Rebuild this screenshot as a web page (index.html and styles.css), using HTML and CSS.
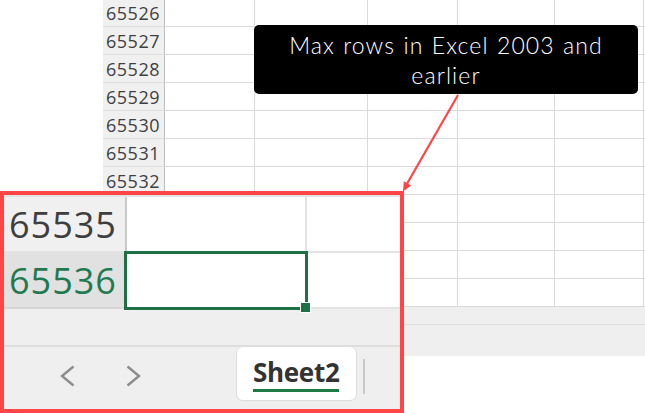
FILE: index.html
```html
<!DOCTYPE html>
<html lang="en">
<head>
<meta charset="utf-8">
<title>Sheet2</title>
<link rel="stylesheet" href="styles.css">
</head>
<body>
<div class="page">
  <div class="sheet">
    <div class="grid">
      <div class="row"><div class="gutter"></div><div class="rh">65526</div><div class="c c1"></div><div class="c c2"></div><div class="c c3"></div><div class="c c4"></div><div class="c c5"></div><div class="c c6"></div></div>
      <div class="row"><div class="gutter"></div><div class="rh">65527</div><div class="c c1"></div><div class="c c2"></div><div class="c c3"></div><div class="c c4"></div><div class="c c5"></div><div class="c c6"></div></div>
      <div class="row"><div class="gutter"></div><div class="rh">65528</div><div class="c c1"></div><div class="c c2"></div><div class="c c3"></div><div class="c c4"></div><div class="c c5"></div><div class="c c6"></div></div>
      <div class="row"><div class="gutter"></div><div class="rh">65529</div><div class="c c1"></div><div class="c c2"></div><div class="c c3"></div><div class="c c4"></div><div class="c c5"></div><div class="c c6"></div></div>
      <div class="row"><div class="gutter"></div><div class="rh">65530</div><div class="c c1"></div><div class="c c2"></div><div class="c c3"></div><div class="c c4"></div><div class="c c5"></div><div class="c c6"></div></div>
      <div class="row"><div class="gutter"></div><div class="rh">65531</div><div class="c c1"></div><div class="c c2"></div><div class="c c3"></div><div class="c c4"></div><div class="c c5"></div><div class="c c6"></div></div>
      <div class="row"><div class="gutter"></div><div class="rh">65532</div><div class="c c1"></div><div class="c c2"></div><div class="c c3"></div><div class="c c4"></div><div class="c c5"></div><div class="c c6"></div></div>
      <!-- rows below sit behind the magnified inset -->
      <div class="row"><div class="gutter"></div><div class="rh"></div><div class="c c1"></div><div class="c c2"></div><div class="c c3"></div><div class="c c4"></div><div class="c c5"></div><div class="c c6"></div></div>
      <div class="row"><div class="gutter"></div><div class="rh"></div><div class="c c1"></div><div class="c c2"></div><div class="c c3"></div><div class="c c4"></div><div class="c c5"></div><div class="c c6"></div></div>
      <div class="row"><div class="gutter"></div><div class="rh"></div><div class="c c1"></div><div class="c c2"></div><div class="c c3"></div><div class="c c4"></div><div class="c c5"></div><div class="c c6"></div></div>
      <div class="row"><div class="gutter"></div><div class="rh"></div><div class="c c1"></div><div class="c c2"></div><div class="c c3"></div><div class="c c4"></div><div class="c c5"></div><div class="c c6"></div></div>
    </div>
    <div class="sheet-foot">
      <div class="hscroll"></div>
      <div class="tabstrip"></div>
    </div>
  </div>

  <div class="callout">Max rows in Excel 2003 and earlier</div>

  <svg class="pointer" width="645" height="413" viewBox="0 0 645 413">
    <line x1="458" y1="95" x2="406" y2="185.5" stroke="#ff4545" stroke-width="2.2"/>
    <polygon points="403,191.5 411.2,185.4 403.8,181.2" fill="#ff4545"/>
  </svg>

  <div class="zoom">
    <div class="zline"></div>
    <div class="zrow">
      <div class="zrh">65535</div>
      <div class="zc zc1"></div>
      <div class="zc zc2"></div>
    </div>
    <div class="zrow zrow-sel">
      <div class="zrh zrh-sel">65536</div>
      <div class="zc zc1 active"></div>
      <div class="zc zc2"></div>
    </div>
    <div class="zgap"></div>
    <div class="ztabs">
      <svg class="nav nav-prev" width="16" height="22" viewBox="0 0 16 22"><polyline points="13.5,1.5 2,11 13.5,20.5" fill="none" stroke="#8c8c8c" stroke-width="2.4"/></svg>
      <svg class="nav nav-next" width="16" height="22" viewBox="0 0 16 22"><polyline points="2.5,1.5 14,11 2.5,20.5" fill="none" stroke="#8c8c8c" stroke-width="2.4"/></svg>
      <div class="tab"><span class="tab-label">Sheet2</span></div>
      <div class="tab-sep"></div>
    </div>
  </div>
</div>
</body>
</html>
```

FILE: styles.css
```css
html, body {
  margin: 0;
  padding: 0;
  background: #ffffff;
}

.page {
  position: relative;
  width: 645px;
  height: 413px;
  overflow: hidden;
  font-family: "Open Sans", "Liberation Sans", sans-serif;
}

/* ---------- worksheet ---------- */
.grid {
  margin-top: -1px;
}

.row {
  display: flex;
  height: 28px;
}

.gutter {
  width: 103px;
  flex: none;
}

.rh {
  width: 62px;
  flex: none;
  box-sizing: border-box;
  height: 28px;
  background: #f0f0f0;
  border-right: 1px solid #bdbdbd;
  border-bottom: 1px solid #dedede;
  padding: 2px 0 0 3px;
  font-size: 18px;
  line-height: 25px;
  letter-spacing: 0.5px;
  color: #404040;
}

.c {
  flex: none;
  box-sizing: border-box;
  height: 28px;
  border-right: 1px solid #dadada;
  border-bottom: 1px solid #dadada;
}
.c1 { width: 90px; }
.c2 { width: 113px; }
.c3 { width: 90px; }
.c4 { width: 97px; }
.c5 { width: 89px; }
.c6 { flex: 1; border-right: none; }

.sheet-foot {
  background: #efefef;
}
.hscroll {
  height: 17px;
  border-bottom: 1px solid #dcdcdc;
}
.tabstrip {
  height: 31px;
}

/* ---------- callout ---------- */
.callout {
  position: absolute;
  left: 254px;
  top: 25px;
  width: 384px;
  height: 69px;
  box-sizing: border-box;
  padding: 5px 16px 0;
  background: #000000;
  border-radius: 5px;
  color: #ffffff;
  font-family: "Lato", "DejaVu Sans", sans-serif;
  font-weight: 300;
  font-size: 23px;
  line-height: 30px;
  letter-spacing: 1.1px;
  word-spacing: 1px;
  text-align: center;
}

.pointer {
  position: absolute;
  left: 0;
  top: 0;
}

/* ---------- magnified inset ---------- */
.zoom {
  position: absolute;
  left: 0;
  top: 191px;
  width: 404px;
  height: 222px;
  box-sizing: border-box;
  border: 4px solid #ff4545;
  background: #efefef;
  display: flex;
  flex-direction: column;
}

.zline {
  height: 2px;
  background: #e2e2e2;
  flex: none;
}

.zrow {
  display: flex;
  height: 56px;
  flex: none;
}

.zrh {
  width: 123px;
  flex: none;
  box-sizing: border-box;
  background: #f0f0f0;
  border-right: 2px solid #c9c9c9;
  border-bottom: 2px solid #e2e2e2;
  padding: 5px 0 0 5px;
  font-size: 36px;
  line-height: 46px;
  letter-spacing: 1px;
  color: #3e3e3e;
}

.zrh-sel {
  background: #e1e1e1;
  color: #1f7a50;
  border-bottom-color: #d6d6d6;
}

.zc {
  box-sizing: border-box;
  background: #ffffff;
  border-bottom: 2px solid #e2e2e2;
}
.zc1 {
  width: 180px;
  flex: none;
  border-right: 2px solid #e2e2e2;
}
.zc2 {
  flex: 1;
}

.zc.active {
  position: relative;
}
.zc.active::after {
  content: "";
  position: absolute;
  left: -3px;
  top: -2px;
  right: -3px;
  bottom: -3px;
  border: 3px solid #1e7145;
}
.zc.active::before {
  content: "";
  position: absolute;
  right: -6px;
  bottom: -6px;
  width: 9px;
  height: 9px;
  background: #1e7145;
  border: 1px solid #ffffff;
  z-index: 1;
}

.zgap {
  height: 36px;
  flex: none;
  border-bottom: 2px solid #dedede;
}

.ztabs {
  flex: 1;
  display: flex;
  align-items: flex-start;
}

.nav {
  flex: none;
  margin-top: 18px;
}
.nav-prev { margin-left: 56px; }
.nav-next { margin-left: 49px; }

.tab {
  flex: none;
  margin-left: 95px;
  margin-top: -1px;
  width: 121px;
  height: 55px;
  box-sizing: border-box;
  background: #ffffff;
  border: 1px solid #dcdcdc;
  border-radius: 7px;
  padding: 9px 0 0 16px;
}

.tab-label {
  display: inline-block;
  font-size: 26px;
  font-weight: 700;
  line-height: 32px;
  letter-spacing: -0.3px;
  color: #333333;
  border-bottom: 3px solid #1e7a45;
  padding-bottom: 1px;
}

.tab-sep {
  flex: none;
  width: 2px;
  height: 35px;
  margin: 12px 0 0 6px;
  background: #c8c8c8;
}
```
